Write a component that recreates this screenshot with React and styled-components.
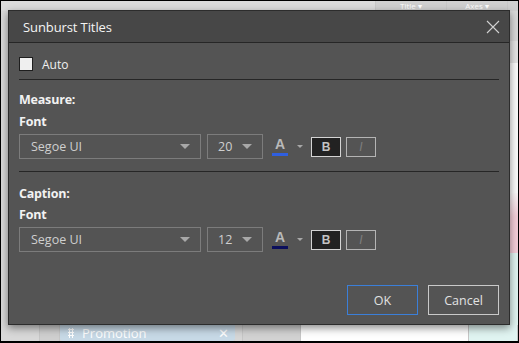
import React from 'react'
import styled, { createGlobalStyle } from 'styled-components'

const GlobalStyle = createGlobalStyle`
	html, body {
		margin: 0;
		padding: 0;
		background: #d6d6d6;
	}
	body {
		font-family: "Open Sans", "Noto Sans", sans-serif;
	}
`

const Screen = styled.div`
	position: relative;
	width: 519px;
	height: 343px;
	box-sizing: border-box;
	border: 1px solid #000;
	border-bottom-width: 2px;
	background: #d8d8d8;
	overflow: hidden;
	display: flex;
	flex-direction: column;
`

const TopBar = styled.div`
	height: 10px;
	display: flex;
	justify-content: flex-end;
	align-items: flex-start;
	background: #dcdcdc;
	font-size: 8px;
	color: #fff;
`

const TopItem = styled.div`
	width: ${p => p.w}px;
	height: 10px;
	line-height: 9px;
	text-align: center;
	border-left: 1px solid #c8c8c8;
	background: #d0d0d0;
	overflow: hidden;
`

const Workspace = styled.div`
	flex: 1;
	display: flex;
`

const Gutter = styled.div`
	flex: 1;
	background: linear-gradient(90deg, #d9d9d9 0, #d9d9d9 38px, #cfcfcf 38px, #cfcfcf 50px, #d6d6d6 50px);
`

const SidePanel = styled.div`
	width: 9px;
	display: flex;
	flex-direction: column;
`

const SideBlock = styled.div`
	height: ${p => p.h ? `${p.h}px` : 'auto'};
	flex: ${p => p.h ? 'none' : 1};
	background: ${p => p.bg};
`

const BottomBar = styled.div`
	height: 16px;
	display: flex;
	background: #d2d2d2;
`

const BottomCell = styled.div`
	width: ${p => p.w ? `${p.w}px` : 'auto'};
	flex: ${p => p.w ? 'none' : 1};
	background: ${p => p.bg};
	border-right: 1px solid #c6c6c6;
`

const Tab = styled.div`
	width: 175px;
	display: flex;
	align-items: center;
	gap: 8px;
	padding: 0 6px 0 8px;
	box-sizing: border-box;
	background: #c7d9e6;
	color: #fff;
	font-size: 13px;
	border-radius: 0 0 3px 3px;
`

const Grip = styled.span`
	width: 6px;
	height: 10px;
	background-image: radial-gradient(circle, #fff 1px, transparent 1.2px);
	background-size: 3px 3px;
`

const TabName = styled.span`
	flex: 1;
`

const Dialog = styled.div`
	position: absolute;
	left: 7px;
	top: 9px;
	width: 502px;
	height: 315px;
	box-sizing: border-box;
	border: 1px solid #2c2c2c;
	background: #545454;
	box-shadow: 0 3px 8px rgba(0, 0, 0, 0.45);
	display: flex;
	flex-direction: column;
	color: #f2f2f2;
	font-family: "Open Sans", "Noto Sans", sans-serif;
`

const Header = styled.div`
	height: 32px;
	box-sizing: border-box;
	background: #474747;
	border-bottom: 1px solid #262626;
	display: flex;
	align-items: center;
	padding: 0 8px 0 14px;
`

const Title = styled.div`
	flex: 1;
	font-size: 13px;
	color: #f4f4f4;
	letter-spacing: -0.1px;
`

const CloseButton = styled.button`
	width: 16px;
	height: 16px;
	padding: 0;
	border: 0;
	background: none;
	display: flex;
	align-items: center;
	justify-content: center;
`

const Body = styled.div`
	flex: 1;
	display: flex;
	flex-direction: column;
	padding: 14px 10px 9px 10px;
`

const CheckRow = styled.label`
	display: flex;
	align-items: center;
	gap: 9px;
	height: 14px;
	font-size: 12px;
	color: #f0f0f0;
`

const CheckBox = styled.span`
	width: 12px;
	height: 12px;
	border: 1px solid #1e1e1e;
	background: #efefef;
`

const Divider = styled.div`
	height: 1px;
	background: #262626;
	margin-top: ${p => p.top}px;
`

const SectionLabel = styled.div`
	font-size: 12.5px;
	font-weight: 700;
	line-height: 16px;
	color: #f2f2f2;
	margin-top: ${p => p.top}px;
	letter-spacing: -0.2px;
`

const FontRow = styled.div`
	display: flex;
	align-items: center;
	margin-top: 4px;
	height: 25px;
`

const Select = styled.div`
	width: ${p => p.w}px;
	height: 25px;
	box-sizing: border-box;
	border: 1px solid #7c7c7c;
	display: flex;
	align-items: center;
	padding: 0 10px 0 ${p => p.pad}px;
	margin-right: ${p => p.gap}px;
	font-size: 12.5px;
	color: #cfcfcf;
`

const SelectText = styled.span`
	flex: 1;
`

const Caret = styled.span`
	width: 0;
	height: 0;
	border-left: ${p => p.size}px solid transparent;
	border-right: ${p => p.size}px solid transparent;
	border-top: ${p => p.drop}px solid #a8a8a8;
`

const ColorPicker = styled.div`
	display: flex;
	align-items: center;
	gap: 9px;
	margin-right: 8px;
`

const ColorSwatch = styled.div`
	width: 16px;
	display: flex;
	flex-direction: column;
	align-items: center;
`

const ColorLetter = styled.span`
	font-size: 14px;
	font-weight: 700;
	line-height: 13px;
	color: #b9b9b9;
	font-family: "Liberation Sans", sans-serif;
`

const ColorBar = styled.span`
	width: 16px;
	height: 3px;
	margin-top: 2px;
	background: ${p => p.color};
`

const StyleButton = styled.button`
	width: 30px;
	height: 20px;
	box-sizing: border-box;
	margin-right: 5px;
	padding: 0;
	border: 1px solid ${p => p.active ? '#d4d4d4' : '#b4b4b4'};
	background: ${p => p.active ? '#222' : 'transparent'};
	color: ${p => p.active ? '#c4c4c4' : '#7e7e7e'};
	font-family: "Liberation Sans", sans-serif;
	font-size: 12px;
	font-weight: ${p => p.active ? 700 : 400};
	font-style: ${p => p.active ? 'normal' : 'italic'};
	display: flex;
	align-items: center;
	justify-content: center;
`

const Footer = styled.div`
	margin-top: auto;
	display: flex;
	justify-content: flex-end;
	gap: 10px;
`

const Button = styled.button`
	width: 71px;
	height: 30px;
	box-sizing: border-box;
	background: transparent;
	border: 1px solid ${p => p.primary ? '#3b7fd9' : '#c9c9c9'};
	color: #e2e2e2;
	font-family: "Open Sans", "Noto Sans", sans-serif;
	font-size: 12.5px;
	padding: 0;
`

const CloseIcon = () => (
	<svg width="14" height="14" viewBox="0 0 14 14">
		<path d="M1 1 L13 13 M13 1 L1 13" stroke="#d2d2d2" strokeWidth="1.1" fill="none" />
	</svg>
)

const FontControls = ({ size, color }) => (
	<FontRow>
		<Select w={182} pad={11} gap={6}>
			<SelectText>Segoe UI</SelectText>
			<Caret size={5} drop={5} />
		</Select>
		<Select w={56} pad={10} gap={9}>
			<SelectText>{size}</SelectText>
			<Caret size={5} drop={5} />
		</Select>
		<ColorPicker>
			<ColorSwatch>
				<ColorLetter>A</ColorLetter>
				<ColorBar color={color} />
			</ColorSwatch>
			<Caret size={3} drop={3} />
		</ColorPicker>
		<StyleButton active>B</StyleButton>
		<StyleButton>I</StyleButton>
	</FontRow>
)

const Section = ({ label, top, fontTop, size, color }) => (
	<>
		<SectionLabel top={top}>{label}</SectionLabel>
		<SectionLabel top={fontTop}>Font</SectionLabel>
		<FontControls size={size} color={color} />
	</>
)

const App = () => (
	<>
		<GlobalStyle />
		<Screen>
			<TopBar>
				<TopItem w={70}>Title ▾</TopItem>
				<TopItem w={60}>Axes ▾</TopItem>
				<TopItem w={10} />
			</TopBar>
			<Workspace>
				<Gutter />
				<SidePanel>
					<SideBlock h={30} bg="#d8d8d8" />
					<SideBlock h={22} bg="#e3e3e3" />
					<SideBlock h={130} bg="#fafafa" />
					<SideBlock h={60} bg="linear-gradient(160deg, #fafafa 0, #f3cdd8 40%, #f3cdd8 100%)" />
					<SideBlock bg="#dff3ef" />
				</SidePanel>
			</Workspace>
			<BottomBar>
				<BottomCell w={38} bg="#d8d8d8" />
				<BottomCell w={19} bg="#cfcfcf" />
				<Tab>
					<Grip />
					<TabName>Promotion</TabName>
					<span>✕</span>
				</Tab>
				<BottomCell w={7} bg="#d6d6d6" />
				<BottomCell w={57} bg="#d2d2d2" />
				<BottomCell w={167} bg="#fefefe" />
				<BottomCell bg="#e0f4f1" />
			</BottomBar>
			<Dialog>
				<Header>
					<Title>Sunburst Titles</Title>
					<CloseButton aria-label="Close">
						<CloseIcon />
					</CloseButton>
				</Header>
				<Body>
					<CheckRow>
						<CheckBox />
						Auto
					</CheckRow>
					<Divider top={8} />
					<Section label="Measure:" top={12} fontTop={6} size="20" color="#2f5fe0" />
					<Divider top={12} />
					<Section label="Caption:" top={14} fontTop={5} size="12" color="#0b0f5c" />
					<Footer>
						<Button primary>OK</Button>
						<Button>Cancel</Button>
					</Footer>
				</Body>
			</Dialog>
		</Screen>
	</>
)

export default App
